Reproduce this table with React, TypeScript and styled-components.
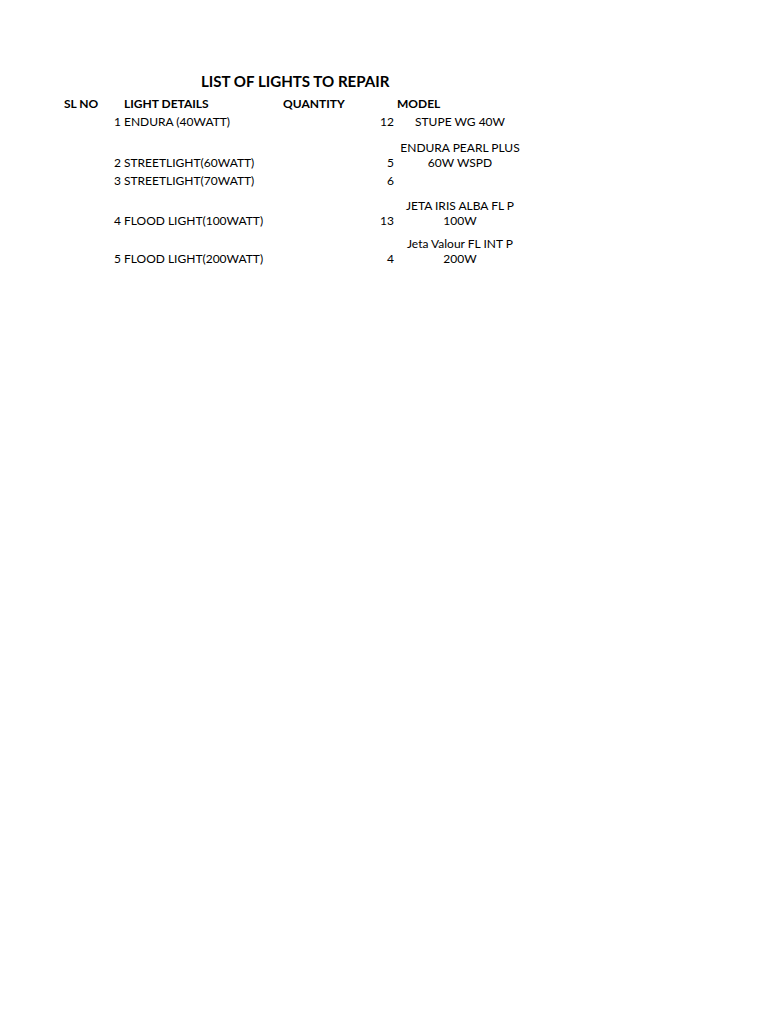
import styled, { createGlobalStyle } from "styled-components";

type Row = { sl: number; details: string; qty: number; model: string[]; height: number };

const rows: Row[] = [
    { sl: 1, details: "ENDURA (40WATT)", qty: 12, model: ["STUPE WG 40W"], height: 18 },
    { sl: 2, details: "STREETLIGHT(60WATT)", qty: 5, model: ["ENDURA PEARL PLUS", "60W WSPD"], height: 41 },
    { sl: 3, details: "STREETLIGHT(70WATT)", qty: 6, model: [], height: 18 },
    { sl: 4, details: "FLOOD LIGHT(100WATT)", qty: 13, model: ["JETA IRIS ALBA FL P", "100W"], height: 40 },
    { sl: 5, details: "FLOOD LIGHT(200WATT)", qty: 4, model: ["Jeta Valour FL INT P", "200W"], height: 38 },
];

const GlobalStyle = createGlobalStyle`
    body {
        margin: 0;
        background: #ffffff;
        font-family: Lato, "Liberation Sans", sans-serif;
        color: #000000;
    }
`

export default function App() {
    return (
        <>
            <GlobalStyle />
            <Page>
                <Sheet>
                    <TitleRow>
                        <Title>LIST OF LIGHTS TO REPAIR</Title>
                    </TitleRow>
                    <SheetRow height={21}>
                        <HeadCell>SL NO</HeadCell>
                        <HeadCell>LIGHT DETAILS</HeadCell>
                        <HeadCell>QUANTITY</HeadCell>
                        <HeadCell>MODEL</HeadCell>
                    </SheetRow>
                    {rows.map((row) => (
                        <SheetRow key={row.sl} height={row.height}>
                            <Cell align="right">{row.sl}</Cell>
                            <Cell align="left">{row.details}</Cell>
                            <Cell align="right">{row.qty}</Cell>
                            <Cell align="center">
                                {row.model.map((line) => (
                                    <div key={line}>{line}</div>
                                ))}
                            </Cell>
                        </SheetRow>
                    ))}
                </Sheet>
            </Page>
        </>
    )
}

const Page = styled.div`
    width: 768px;
    height: 1024px;
    padding: 72px 0 0 60px;
    box-sizing: border-box;
`

const Sheet = styled.div`
    display: flex;
    flex-direction: column;
    width: 466px;
`

const TitleRow = styled.div`
    display: flex;
    align-items: flex-end;
    height: 18px;
    padding-left: 141px;
`

const Title = styled.div`
    font-size: 15.1px;
    font-weight: bold;
    line-height: 18px;
    white-space: nowrap;
`

const SheetRow = styled.div<{ height: number }>`
    display: grid;
    grid-template-columns: 61px 159px 114px 132px;
    height: ${({ height }) => height}px;
    align-items: end;
`

const HeadCell = styled.div`
    font-size: 12px;
    font-weight: bold;
    line-height: 15px;
    padding-left: 3px;
    white-space: nowrap;

    &:first-child {
        padding-left: 4px;
    }
`

const Cell = styled.div<{ align: "left" | "right" | "center" }>`
    font-size: 12px;
    line-height: 15px;
    text-align: ${({ align }) => align};
    padding: ${({ align }) => (align === "left" ? "0 0 0 3px" : "0")};
    white-space: nowrap;
`
